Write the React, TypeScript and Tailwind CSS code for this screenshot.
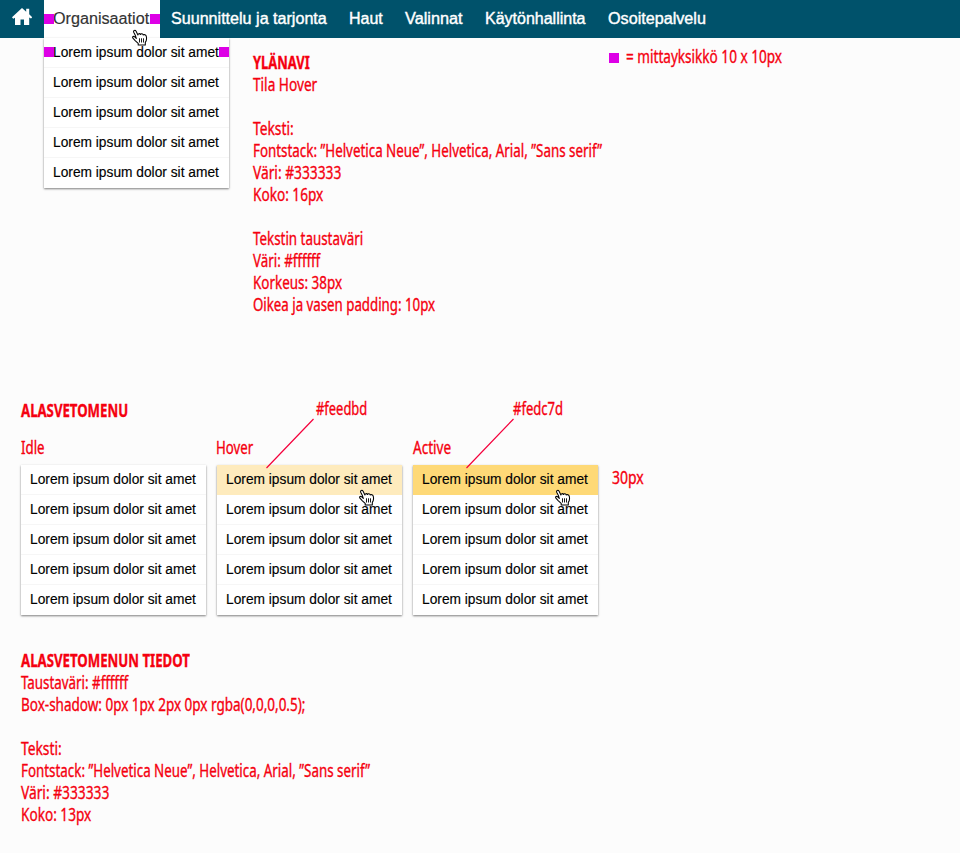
import { useLayoutEffect, useRef, useState } from "react";

/* Single line of text condensed or widened to a given width. */
function Fit({ w, children }: { w: number; children: string }) {
  const ref = useRef<HTMLSpanElement>(null);
  const [scale, setScale] = useState(1);
  useLayoutEffect(() => {
    if (ref.current) setScale(w / ref.current.offsetWidth);
  }, [w]);
  return (
    <span className="block whitespace-nowrap" style={{ width: w }}>
      <span ref={ref} className="inline-block origin-left" style={{ transform: `scaleX(${scale})` }}>
        {children}
      </span>
    </span>
  );
}

type Line = [string, number] | null;

function Notes({ title, lines }: { title: [string, number]; lines: Line[] }) {
  return (
    <div>
      <h2 className="h-[22px] font-bold">
        <Fit w={title[1]}>{title[0]}</Fit>
      </h2>
      {lines.map((l, i) => (
        <div key={i} className="h-[22px]">
          {l && <Fit w={l[1]}>{l[0]}</Fit>}
        </div>
      ))}
    </div>
  );
}

function Hand({ className }: { className: string }) {
  return (
    <svg className={`absolute ${className}`} width="16" height="17" viewBox="0 0 16 17">
      <path
        d="M4.5 9.8 3.4 6.6 1.7 3.2C1.1 1.4 3.2.6 4.1 2.2L5.9 6C5.9 4.4 7.9 4.2 8.5 5.5 8.9 4.5 10.8 4.6 11.3 6 12.1 5.2 14 5.7 14.3 7.3 14.8 9.5 14.6 11.6 13.3 13.4V16H6.2V14.4L3.4 11.8 .9 9.2C0 7.6 1.6 6.9 2.8 7.9L4.5 9.6"
        fill="#fff"
        stroke="#000"
        strokeWidth="1.05"
        strokeLinejoin="round"
      />
      <path d="M7.5 9.3v4.2M9.5 9.3v4.2M11.5 9.3v4.2" stroke="#000" strokeWidth="0.9" />
    </svg>
  );
}

function Menu({ first = "bg-white" }: { first?: string }) {
  return (
    <ul className="w-[185px] bg-white text-[14px] text-black shadow-[0_1px_2px_0_rgba(0,0,0,0.5)] [-webkit-text-stroke:0.15px_black]">
      {[0, 1, 2, 3, 4].map((i) => (
        <li
          key={i}
          className={`h-[30px] pl-[9px] leading-[29px] ${i === 0 ? first : ""} ${i < 4 ? "border-b" : ""} ${i === 0 && first !== "bg-white" ? "border-transparent" : "border-[#f6f6f6]"}`}
        >
          <Fit w={166}>Lorem ipsum dolor sit amet</Fit>
        </li>
      ))}
    </ul>
  );
}

const nav: [string, number][] = [
  ["Suunnittelu ja tarjonta", 156],
  ["Haut", 34],
  ["Valinnat", 58],
  ["Käytönhallinta", 101],
  ["Osoitepalvelu", 98],
];

const fontLine: Line = ["Fontstack: ”Helvetica Neue”, Helvetica, Arial, ”Sans serif”", 349];

export default function App() {
  return (
    <div className="h-[853px] w-[960px] overflow-hidden bg-[#fcfcfc] font-['Liberation_Sans',Arial,sans-serif]">
      <header className="flex h-[38px] bg-[#00526b] text-[16px] leading-[37px] text-white">
        <div className="w-[44px] pl-[12px] pt-[8px]">
          <svg width="20" height="17" viewBox="0 0 20 17" fill="#fff">
            <path d="M10 0 14.2 3.7V.8h3v5.5l3 3-1.2 1.3-1.8-1V17H12v-5.5H8.5V17H3V9.7l-1.8 1L0 9.3z" />
          </svg>
        </div>
        <div className="relative w-[116px] bg-white pl-[9px] text-[#333333] [-webkit-text-stroke:0.15px_#333333]">
          <Fit w={96}>Organisaatiot</Fit>
          <i className="absolute left-0 top-[14px] size-[10px] bg-[#dd00e6]" />
          <i className="absolute right-0 top-[14px] size-[10px] bg-[#dd00e6]" />
          <Hand className="left-[88px] top-[29px] z-10" />
        </div>
        <nav className="ml-[11px] flex gap-[22px] [-webkit-text-stroke:0.4px_white]">
          {nav.map(([t, w]) => (
            <Fit key={t} w={w}>
              {t}
            </Fit>
          ))}
        </nav>
      </header>

      <main className="font-['Noto_Sans','Open_Sans',sans-serif] text-[17.5px] leading-[20px] text-[#f5000f] [-webkit-text-stroke:0.35px_#f5000f]">
        <section className="flex h-[362px] pl-[44px]">
          <div className="relative h-[150px] font-['Liberation_Sans',Arial,sans-serif]">
            <Menu />
            <i className="absolute left-0 top-[9px] size-[10px] bg-[#dd00e6]" />
            <i className="absolute right-0 top-[9px] size-[10px] bg-[#dd00e6]" />
          </div>
          <div className="ml-[24px] w-[356px] pt-[14px]">
            <Notes
              title={["YLÄNAVI", 57]}
              lines={[
                ["Tila Hover", 64],
                null,
                ["Teksti:", 41],
                fontLine,
                ["Väri: #333333", 88],
                ["Koko: 16px", 70],
                null,
                ["Tekstin taustaväri", 110],
                ["Väri: #ffffff", 67],
                ["Korkeus: 38px", 89],
                ["Oikea ja vasen padding: 10px", 182],
              ]}
            />
          </div>
          <div className="flex gap-[7px] pt-[8px]">
            <i className="mt-[7px] size-[10px] bg-[#dd00e6]" />
            <Fit w={156}>= mittayksikkö 10 x 10px</Fit>
          </div>
        </section>

        <section className="relative h-[250px] pl-[21px]">
          <h2 className="h-[37px] font-bold">
            <Fit w={107}>ALASVETOMENU</Fit>
          </h2>
          <div className="absolute left-[316px] top-[-2px]">
            <Fit w={51}>#feedbd</Fit>
          </div>
          <div className="absolute left-[513px] top-[-2px]">
            <Fit w={50}>#fedc7d</Fit>
          </div>
          <div className="flex gap-[11px]">
            <div>
              <div className="h-[28px]">
                <Fit w={23.5}>Idle</Fit>
              </div>
              <div className="font-['Liberation_Sans',Arial,sans-serif]">
                <Menu />
              </div>
            </div>
            <div className="relative">
              <div className="-ml-px h-[28px]">
                <Fit w={37}>Hover</Fit>
              </div>
              <div className="font-['Liberation_Sans',Arial,sans-serif]">
                <Menu first="bg-[#feebbd]" />
              </div>
              <Hand className="left-[142px] top-[52px]" />
            </div>
            <div className="relative">
              <div className="h-[28px]">
                <Fit w={38}>Active</Fit>
              </div>
              <div className="font-['Liberation_Sans',Arial,sans-serif]">
                <Menu first="bg-[#fed977]" />
              </div>
              <Hand className="left-[142px] top-[52px]" />
            </div>
            <div className="ml-[3px] pt-[30px]">
              <Fit w={32}>30px</Fit>
            </div>
          </div>
          <svg className="absolute left-0 top-0" width="600" height="80" fill="none" stroke="#f5003c" strokeWidth="1.2">
            <path d="M313.5 19 266.5 68M513.5 19 466.5 68" />
          </svg>
        </section>

        <section className="pl-[21px]">
          <Notes
            title={["ALASVETOMENUN TIEDOT", 169]}
            lines={[
              ["Taustaväri: #ffffff", 107.5],
              ["Box-shadow: 0px 1px 2px 0px rgba(0,0,0,0.5);", 284.5],
              null,
              ["Teksti:", 41],
              fontLine,
              ["Väri: #333333", 88],
              ["Koko: 13px", 70],
            ]}
          />
        </section>
      </main>
    </div>
  );
}
